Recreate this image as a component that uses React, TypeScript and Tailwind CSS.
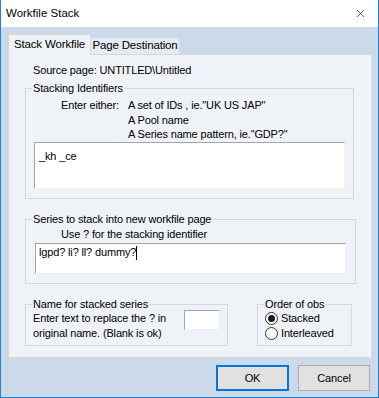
import { X } from "lucide-react";

const font = { fontFamily: '"Liberation Sans", Arial, sans-serif' };

function GroupBox({
  label,
  className,
  children,
}: {
  label: string;
  className?: string;
  children: React.ReactNode;
}) {
  return (
    <fieldset className={`border border-[#d5d9de] ${className ?? ""}`}>
      <legend className="ml-[6px] px-[1px] leading-[15px]">{label}</legend>
      {children}
    </fieldset>
  );
}

function Radio({ label, checked }: { label: string; checked?: boolean }) {
  return (
    <div className="flex h-[15px] items-center gap-[3px]">
      <span className="flex h-[13px] w-[13px] items-center justify-center rounded-full border border-[#333] bg-white">
        {checked && <span className="h-[7px] w-[7px] rounded-full bg-[#1a1a1a]" />}
      </span>
      <span>{label}</span>
    </div>
  );
}

export default function App() {
  return (
    <div
      className="flex h-[398px] w-[379px] flex-col whitespace-nowrap border border-t-0 border-[#1d83d4] bg-[#ccd9ea] text-[11px] tracking-[-0.15px] text-black"
      style={font}
    >
      <div className="flex h-[27px] items-center justify-between bg-white pl-[5px] pr-[11px]">
        <span className="text-[11.5px] tracking-normal">Workfile Stack</span>
        <X className="h-[13px] w-[13px]" strokeWidth={1.1} />
      </div>

      <div className="flex flex-1 flex-col px-[7px] pt-[7px]">
        <div className="flex items-end">
          <div className="relative z-10 -mb-px flex h-[21px] w-[83px] items-center justify-center border border-b-0 border-[#d5d9de] bg-[#eff3f8] text-[11.5px]">
            Stack Workfile
          </div>
          <div className="flex h-[17px] w-[89px] items-center justify-center border border-b-0 border-l-0 border-[#d5d9de] bg-[#e5ebf3] text-[11.5px]">
            Page Destination
          </div>
        </div>

        <div className="flex h-[304px] w-[363px] flex-col border border-[#d5d9de] border-r-white bg-[#eff3f8] pl-[16px] pr-[10px]">
          <div className="mt-[8px] pl-[8px] leading-[15px]">Source page: UNTITLED\Untitled</div>

          <GroupBox label="Stacking Identifiers" className="mt-[3px] h-[118px] w-[328px]">
            <div className="px-[8px]">
              <div className="mt-[2px] flex leading-[14.5px]">
                <div className="w-[94px] pl-[27px]">Enter either:</div>
                <div className="flex flex-col">
                  <span>A set of IDs , ie."UK US JAP"</span>
                  <span>A Pool name</span>
                  <span>A Series name pattern, ie."GDP?"</span>
                </div>
              </div>
              <div className="h-[47px] w-[311px] border border-[#f0f0f0] border-l-[#a5a5a5] border-t-[#a5a5a5] bg-white px-[4px] pt-[6px] leading-[15px]">
                _kh _ce
              </div>
            </div>
          </GroupBox>

          <GroupBox label="Series to stack into new workfile page" className="mt-[13px] h-[72px] w-[328px]">
            <div className="px-[9px]">
              <div className="pl-[26px] leading-[15px]">Use ? for the stacking identifier</div>
              <div className="mt-[1px] flex h-[31px] w-[311px] items-start border border-[#f0f0f0] border-l-[#a5a5a5] border-t-[#a5a5a5] bg-white px-[3px] pt-[1px] leading-[15px]">
                <span>lgpd? li? ll? dummy?</span>
                <span className="mt-[1px] h-[14px] w-px bg-black" />
              </div>
            </div>
          </GroupBox>

          <div className="mt-[13px] flex">
            <GroupBox label="Name for stacked series" className="h-[49px] w-[203px]">
              <div className="-mt-[1px] flex items-start px-[7px]">
                <div className="flex w-[151px] flex-col leading-[15px]">
                  <span>Enter text to replace the ? in</span>
                  <span>original name. (Blank is ok)</span>
                </div>
                <div className="-mt-[1px] h-[20px] w-[36px] border border-[#f0f0f0] border-l-[#a5a5a5] border-t-[#a5a5a5] bg-white" />
              </div>
            </GroupBox>
            <GroupBox label="Order of obs" className="ml-[29px] h-[49px] w-[95px]">
              <div className="-mt-[1px] flex flex-col px-[7px]">
                <Radio label="Stacked" checked />
                <Radio label="Interleaved" />
              </div>
            </GroupBox>
          </div>
        </div>

        <div className="mt-[7px] flex justify-end gap-[9px] pr-[1px]">
          <button className="h-[26px] w-[73px] border-2 border-[#0078d7] bg-[#e1e1e1]">OK</button>
          <button className="h-[26px] w-[72px] border border-[#adadad] bg-[#e1e1e1]">Cancel</button>
        </div>
      </div>
    </div>
  );
}
